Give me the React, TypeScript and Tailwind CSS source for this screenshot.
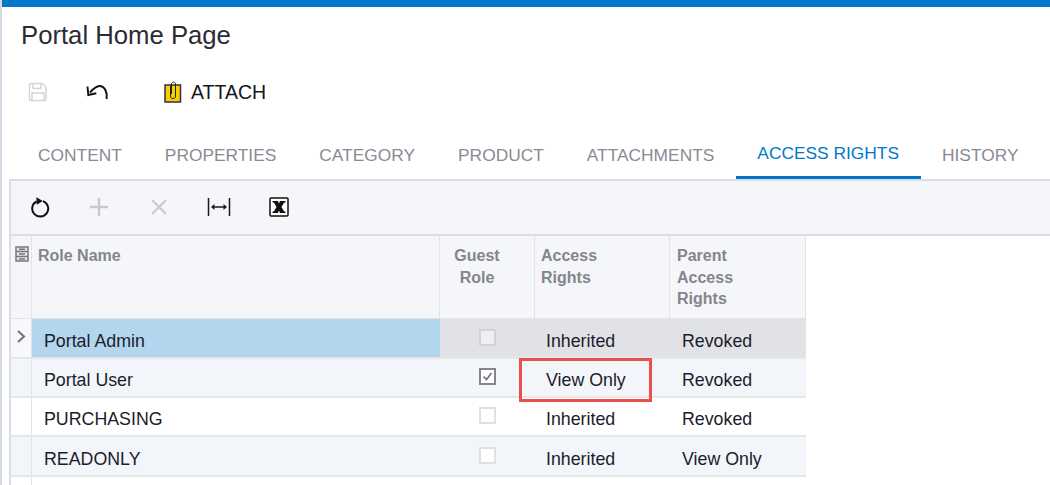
const font = "font-['Liberation_Sans',Arial,sans-serif]";

function SaveIcon() {
  return (
    <svg width="20" height="20" viewBox="0 0 20 20" fill="none" stroke="#d3d3d8" strokeWidth="1.4">
      <path d="M1.5 2.5a1 1 0 0 1 1-1h12l3.500 3.500v12.500a1 1 0 0 1-1 1h-14.500a1 1 0 0 1-1-1z" />
      <path d="M5 1.500v5h8v-5M4 18.500v-7.500h12v7.500" />
    </svg>
  );
}
function UndoIcon() {
  return (
    <svg width="24" height="20" viewBox="0 0 24 20" fill="none" stroke="#111" strokeWidth="2">
      <path d="M21.500 17c1.200-6-1.500-13-7-13-3 0-5.500 2-9.500 6.500" />
      <path d="M2.500 4.500l.8 8.500 8-1.800" strokeWidth="1.900" />
    </svg>
  );
}
function AttachIcon() {
  return (
    <svg width="18" height="22" viewBox="0 0 18 22">
      <rect x="1" y="4" width="15.500" height="17" fill="#f7d000" stroke="#3a2a50" strokeWidth="1.500" />
      <path d="M6.500 5V15c0 3.500 5 3.500 5 0V3c0-2.500-4-2.500-4 0v10" fill="none" stroke="#222" strokeWidth="1" />
    </svg>
  );
}
function RefreshIcon() {
  return (
    <svg width="20" height="22" viewBox="0 0 20 22" fill="none" stroke="#111" strokeWidth="2">
      <path d="M6.500 5.500a8 8 0 1 0 6.500-.4" />
      <path d="M6.300 1.200l6.500 3.800-6 3.800z" fill="#111" stroke="none" />
    </svg>
  );
}
function FitIcon() {
  return (
    <svg width="24" height="20" viewBox="0 0 24 20" fill="none" stroke="#1a1a1a">
      <path d="M1.500 1v18M22.500 1v18" strokeWidth="1.500" />
      <path d="M5 10h14" strokeWidth="1.500" />
      <path d="M7.500 7l-3.500 3 3.500 3zM16.500 7l3.500 3-3.500 3z" fill="#1a1a1a" stroke="none" />
    </svg>
  );
}
function ExcelIcon() {
  return (
    <svg width="20" height="20" viewBox="0 0 20 20">
      <rect x="1" y="1" width="18" height="18" rx="1" fill="#fff" stroke="#111" strokeWidth="1.500" />
      <path d="M3.500 4h5.500l1 2.500 1-2.500h5.500v1.200l-1.500.5-2.500 4.300 2.500 4.300 1.500.5v1.200h-5.500l-1-2.500-1 2.500h-5.500v-1.200l1.500-.5 2.500-4.300-2.500-4.300-1.500-.5z" fill="#111" />
    </svg>
  );
}
function ColumnsIcon() {
  return (
    <svg width="14" height="16" viewBox="0 0 14 16" fill="none" stroke="#77777d" strokeWidth="1.500">
      <rect x="1" y="1" width="12" height="14" fill="#e8e8ea" />
      <path d="M1 5.500h12M1 10.500h12M4 3.300h6M4 8h6M4 13h6" />
    </svg>
  );
}
function Check({ checked, dim }: { checked?: boolean; dim?: boolean }) {
  return (
    <span className={`flex h-[17px] w-[17px] items-center justify-center border-2 ${checked ? "border-[#85858c]" : dim ? "border-[#d2d3d6]" : "border-[#e0e0e2]"} ${dim ? "bg-[#eff0f2]" : "bg-white"}`}>
      {checked && (
        <svg width="13" height="13" viewBox="0 0 13 13" fill="none" stroke="#6b6b72" strokeWidth="1.500">
          <path d="M2.500 6.500l3 3 5-6.500" />
        </svg>
      )}
    </span>
  );
}

const tabs = ["CONTENT", "PROPERTIES", "CATEGORY", "PRODUCT", "ATTACHMENTS", "ACCESS RIGHTS", "HISTORY"];

const rows = [
  { name: "Portal Admin", checked: false, access: "Inherited", parent: "Revoked", h: "h-[40px]", bg: "bg-[#e0e2e6]", nameBg: "bg-[#b3d5ee]", selBg: "bg-[#f8f8fa]", dim: true, cur: true },
  { name: "Portal User", checked: true, access: "View Only", parent: "Revoked", h: "h-[39px]", bg: "bg-[#f2f5fa]", nameBg: "bg-[#f2f5fa]", selBg: "bg-[#f2f5fa]", dim: false, cur: false },
  { name: "PURCHASING", checked: false, access: "Inherited", parent: "Revoked", h: "h-[39px]", bg: "bg-white", nameBg: "bg-white", selBg: "bg-white", dim: false, cur: false },
  { name: "READONLY", checked: false, access: "Inherited", parent: "View Only", h: "h-[40px]", bg: "bg-[#f2f5fa]", nameBg: "bg-[#f2f5fa]", selBg: "bg-[#f2f5fa]", dim: false, cur: false },
];

export default function App() {
  return (
    <div className={`${font} flex h-[485px] w-[1050px] overflow-hidden bg-white text-[#1c1c28]`}>
      <div className="w-[2px] bg-[#d5dbe6]" />
      <div className="relative flex min-w-0 flex-1 flex-col">
        <div className="h-[7px] shrink-0 bg-[#0078c9]" />
        <h1 className="shrink-0 pl-[19px] pt-[12px] text-[25.7px] font-normal leading-[32px] text-[#2b2b36]">Portal Home Page</h1>
        <div className="mt-[25px] flex h-[32px] shrink-0 items-center pl-[26px]">
          <SaveIcon />
          <span className="ml-[37px]"><UndoIcon /></span>
          <span className="ml-[55px]"><AttachIcon /></span>
          <span className="ml-[9px] pt-[2px] text-[19.5px] leading-none text-[#15151c]">ATTACH</span>
        </div>
        <div className="mt-[27px] flex h-[44px] shrink-0 pl-[14.5px]">
          {tabs.map((t) => {
            const active = t === "ACCESS RIGHTS";
            return (
              <div
                key={t}
                className={`flex items-center whitespace-nowrap px-[21.5px] text-[17.35px] ${active ? "border-b-[3px] border-[#0078c9] pb-[5px] text-[#0078c9]" : "pb-[4px] text-[#8a8a94]"}`}
              >
                {t}
              </div>
            );
          })}
        </div>
        <div className="ml-[7px] flex min-h-0 flex-1 flex-col border-l-2 border-t-2 border-[#dcdde2]">
          <div className="flex h-[55px] shrink-0 items-center border-b-2 border-[#dcdde2] bg-[#f4f6f9] pb-[2px]">
            <span className="ml-[19px] flex w-[20px] justify-center"><RefreshIcon /></span>
            <svg className="ml-[39px]" width="20" height="20" viewBox="0 0 20 20" stroke="#c9c9cc" strokeWidth="2.500"><path d="M10 1v18M1 10h18" /></svg>
            <svg className="ml-[41px]" width="18" height="18" viewBox="0 0 18 18" stroke="#c9c9cc" strokeWidth="2"><path d="M2 2l14 14M16 2L2 16" /></svg>
            <span className="ml-[39px]"><FitIcon /></span>
            <span className="ml-[38px]"><ExcelIcon /></span>
          </div>
          <div className="flex w-[795px] shrink-0 flex-col">
            <div className="flex h-[83px] shrink-0 border-b border-[#e2e3e7] bg-[#f4f6f9] text-[16px] font-bold leading-[21.500px] text-[#85858d]">
              <div className="w-[21px] border-r border-[#e2e3e7] pl-[4px] pt-[10px]"><ColumnsIcon /></div>
              <div className="w-[408px] border-r border-[#e2e3e7] pl-[6px] pt-[9px]">Role Name</div>
              <div className="w-[95px] border-r border-[#e2e3e7] pr-[20px] pt-[9px] text-center">Guest<br />Role</div>
              <div className="w-[135px] border-r border-[#e2e3e7] pl-[6px] pt-[9px]">Access<br />Rights</div>
              <div className="w-[136px] border-r border-[#e2e3e7] pl-[7px] pt-[9px]">Parent<br />Access<br />Rights</div>
            </div>
            {rows.map((r) => (
              <div key={r.name} className={`flex ${r.h} shrink-0 border-b-2 border-[#e5e6ea] text-[17.8px] text-[#1c1c2c]`}>
                <div className={`flex w-[21px] items-start justify-center border-r border-[#e2e3e7] pt-[10px] ${r.selBg}`}>
                  {r.cur && (
                    <svg width="11" height="15" viewBox="0 0 11 15" fill="none" stroke="#77777d" strokeWidth="2.200"><path d="M2 2l6 5.500-6 5.500" /></svg>
                  )}
                </div>
                <div className={`flex w-[408px] items-center pl-[12px] pt-[6px] ${r.nameBg}`}>{r.name}</div>
                <div className={`flex w-[95px] items-center justify-center pb-[2px] ${r.bg}`}><Check checked={r.checked} dim={r.dim} /></div>
                <div className={`flex w-[135px] items-center pl-[11px] pt-[6px] ${r.bg}`}>{r.access}</div>
                <div className={`flex w-[136px] items-center pl-[12px] pt-[6px] ${r.bg}`}>{r.parent}</div>
              </div>
            ))}
            <div className="flex h-[10px]">
              <div className="w-[21px] border-r border-[#e2e3e7]" />
            </div>
          </div>
        </div>
        <div className="absolute left-[517px] top-[358px] h-[44px] w-[133px] border-[3px] border-[#ea4f4b]" />
      </div>
    </div>
  );
}
